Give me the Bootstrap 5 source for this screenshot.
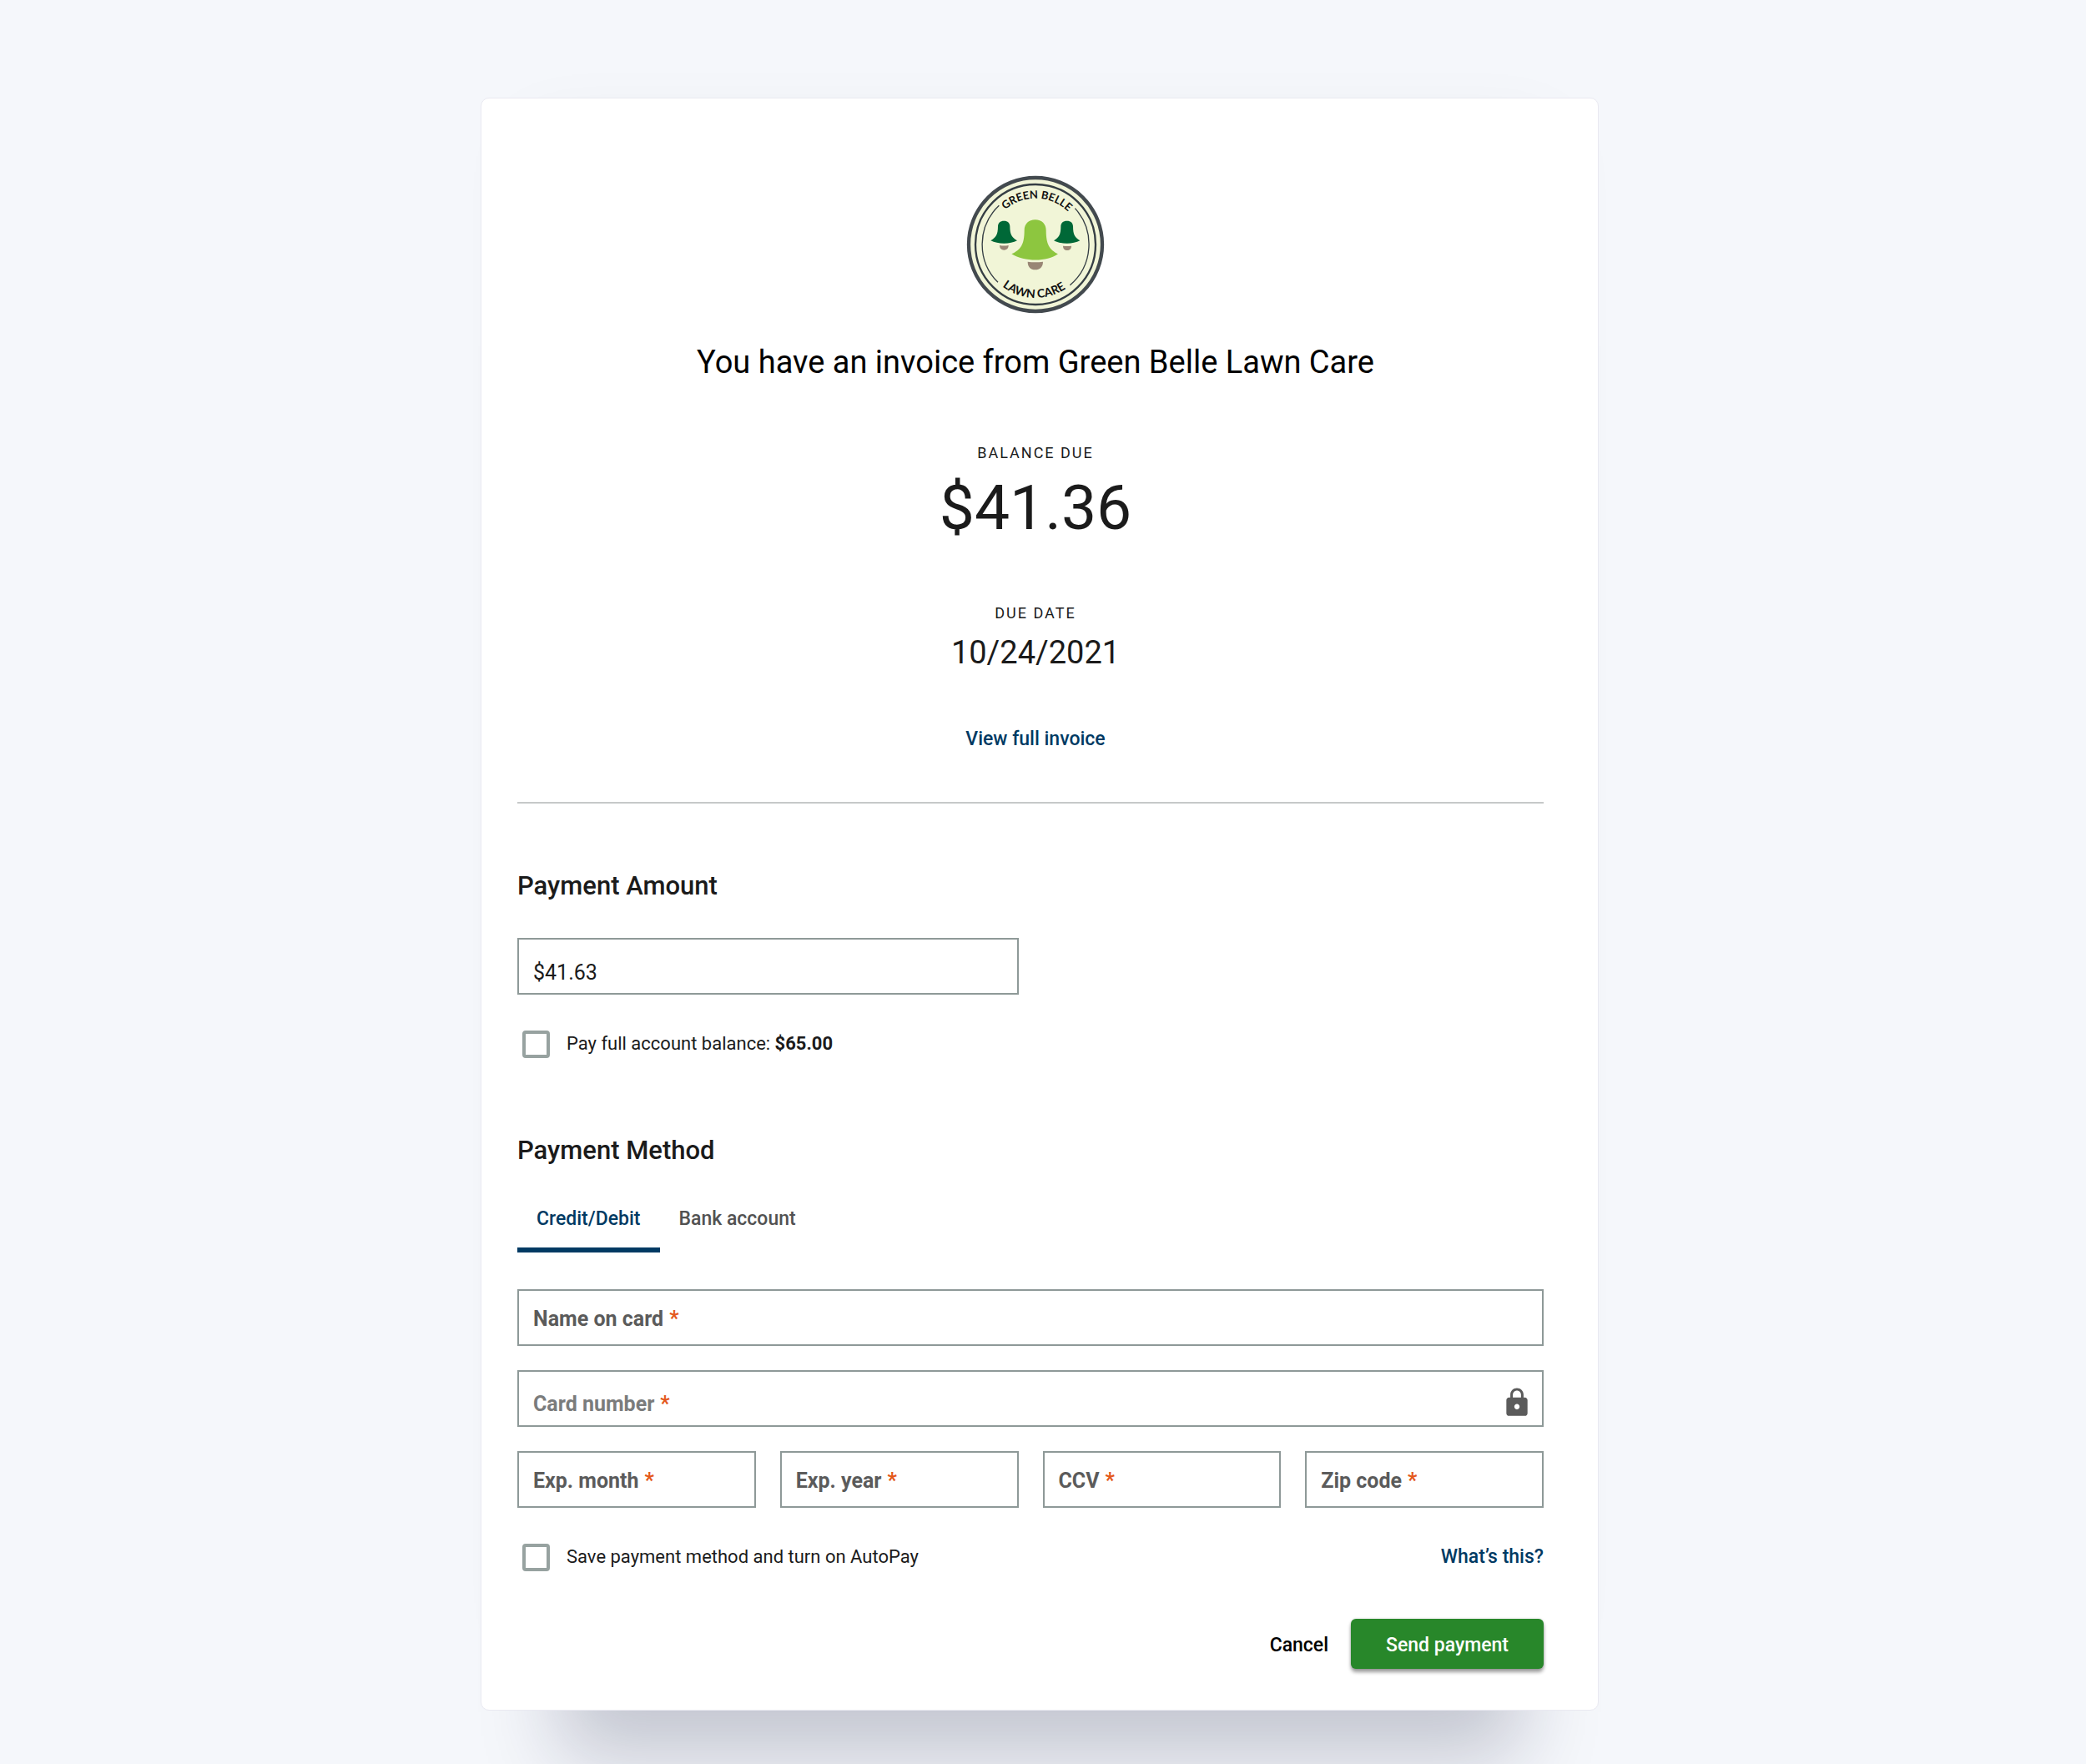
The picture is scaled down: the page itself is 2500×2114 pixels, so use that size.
<!DOCTYPE html>
<html lang="en">
<head>
<meta charset="utf-8">
<meta name="viewport" content="width=device-width, initial-scale=1">
<title>Green Belle Lawn Care – Invoice payment</title>
<link href="https://cdn.jsdelivr.net/npm/bootstrap@5.3.0/dist/css/bootstrap.min.css" rel="stylesheet">
<style>
  :root { --ink: #1b1b1b; --navy: #003a63; --edge: #8e9998; --field-gap: 29px; }
  body { background: #f5f7fb; color: var(--ink); font-family: Roboto, "Noto Sans", sans-serif; font-size: 22px; line-height: 28px; overflow-x: hidden; }
  .page-wrap { padding: 117px 8px 64px 0; overflow: hidden; }
  .pay-card { max-width: 1340px; border: 1px solid #e9e9f1; border-radius: 10px; padding: 92px 65px 49px 43px;
    box-shadow: 0 150px 90px -95px rgba(20, 24, 60, .22), 0 -20px 80px -60px rgba(30, 30, 40, .08); }
  .summary { padding-left: 12px; }
  .brand-logo { width: 166px; height: 166px; margin-bottom: 35px; }
  .title-text { font-size: 38px; line-height: 46px; font-weight: 400; color: #000; margin-bottom: 74px; }
  .overline { font-size: 18px; line-height: 24px; letter-spacing: 2px; text-transform: uppercase; font-weight: 400; margin-bottom: 9px; }
  .amount-due { font-size: 75px; line-height: 88px; margin-bottom: 71px; }
  .date-due { font-size: 38px; line-height: 52px; margin-bottom: 64px; }
  .text-link { color: var(--navy); font-size: 23px; font-weight: 500; text-decoration: none; }
  .text-link:hover { text-decoration: underline; }
  .rule { border: 0; border-top: 2px solid #c6c9c9; opacity: 1; margin: 61px 0 80px; }
  .section-title { font-size: 31px; line-height: 38px; font-weight: 500; margin: 0; }
  .section-title + .field-row { margin-top: 43px; }
  .field-row { display: grid; gap: var(--field-gap); grid-template-columns: repeat(4, minmax(0, 1fr)); }
  .field-half { grid-column: span 2; }
  .field-full { grid-column: 1 / -1; }
  .form-control, .form-floating > .form-control { height: 68px; min-height: 68px; border: 2px solid var(--edge); border-radius: 0; padding: 0 17px; font-size: 25px; line-height: 30px; color: var(--ink); background: #fff; }
  .form-control.money { padding-top: 14px; }
  .form-floating > label { height: 68px; padding: 3px 19px 0; border: 0; display: flex; align-items: center; gap: 7px; font-size: 25px; line-height: 30px; font-weight: 700; color: #5b5b5b; }
  .form-floating > label.low { padding-top: 13px; color: #7b7c7c; }
  .form-floating > .form-control:focus ~ label, .form-floating > .form-control:not(:placeholder-shown) ~ label { opacity: 0; transform: none; }
  .req { color: #e4591b; }
  .lock-icon { position: absolute; right: 13px; top: 20px; width: 38px; height: 38px; }
  .check-line { display: flex; align-items: center; gap: 20px; padding-left: 6px; margin: 42px 0 0; min-height: 34px; }
  .check-line .form-check-input { float: none; width: 33px; height: 33px; margin: 0; border: 4px solid #97a2a0; border-radius: 4px; flex: none; }
  .method-title { margin-top: 92px; }
  .nav-tabs { border: 0; margin: 37px 0 44px; }
  .nav-tabs .nav-link { border: 0; border-bottom: 6px solid transparent; border-radius: 0; margin: 0; padding: 12px 23px 20px; color: #525252; font-size: 23px; font-weight: 500; background: none; }
  .nav-tabs .nav-link.active { color: var(--navy); border-color: var(--navy); background: none; }
  .actions { margin-top: 57px; gap: 27px; }
  .actions .btn { font-size: 23px; line-height: 28px; font-weight: 500; border: 0; height: 60px; }
  .actions .btn-plain { color: #000; padding: 3px 0 0; }
  .actions .btn-send { color: #fff; background: #28872a; border-radius: 6px; padding: 3px 42px 0; box-shadow: 0 4px 4px rgba(0, 0, 0, .38), 0 0 3px rgba(0, 0, 0, .15); }
  .actions .btn-send:hover { color: #fff; background: #217323; }
</style>
</head>
<body>
<main class="page-wrap min-vh-100">
  <section class="card pay-card mx-auto">
    <header class="summary text-center d-flex flex-column align-items-center">
      <svg class="brand-logo" viewBox="54 58 498 498" role="img" aria-label="Green Belle Lawn Care">
        <defs>
          <path id="arc-top" d="M137 307a166 166 0 0 1 332 0"/>
          <path id="arc-bottom" d="M111 307a192 192 0 0 0 384 0"/>
          <g id="bell">
            <path d="M0-90C-24-90-39-74-39-52C-39 0-52 18-85 33C-38 62 42 62 82 33C52 18 39 0 39-52C39-74 24-90 0-90Z"/>
          </g>
        </defs>
        <circle cx="303" cy="307" r="240" fill="#f1f5d7" stroke="#434a4f" stroke-width="13"/>
        <circle cx="303" cy="307" r="216" fill="none" stroke="#353e44" stroke-width="7"/>
        <path d="M172 167A192 192 0 0 0 168 443M445 177A192 192 0 0 1 427 453" fill="none" stroke="#353e44" stroke-width="4"/>
        <use href="#bell" x="302" y="308" fill="#8dc63f"/>
        <g fill="#006837">
          <path d="M190 222C176 222 168 230 168 242C168 272 160 283 142 293C168 307 212 307 237 293C219 283 211 272 211 242C211 230 203 222 190 222Z"/>
          <path d="M416 222C402 222 394 230 394 242C394 272 387 283 369 293C395 307 438 307 463 293C445 283 438 272 438 242C438 230 430 222 416 222Z"/>
        </g>
        <g fill="#998675">
          <path d="M275 369Q302 373 330 369C330 388 318 398 302 398S275 388 275 369Z"/>
          <path d="M174 310Q190 313 206 310C206 321 199 327 190 327S174 321 174 310Z"/>
          <path d="M402 312Q417 314 432 312C432 322 426 328 417 328S402 322 402 312Z"/>
        </g>
        <g font-family="Lato, sans-serif" font-weight="700" fill="#111" text-anchor="middle">
          <text font-size="39"><textPath href="#arc-top" startOffset="51%">GREEN BELLE</textPath></text>
          <text font-size="42"><textPath href="#arc-bottom" startOffset="49%">LAWN CARE</textPath></text>
        </g>
      </svg>
      <h1 class="title-text">You have an invoice from Green Belle Lawn Care</h1>
      <h2 class="overline">Balance due</h2>
      <div class="amount-due">$41.36</div>
      <h2 class="overline">Due date</h2>
      <div class="date-due">10/24/2021</div>
      <a class="text-link" href="#invoice">View full invoice</a>
    </header>

    <hr class="rule">

    <form>
      <h2 class="section-title" id="amount-title">Payment Amount</h2>
      <div class="field-row">
        <div class="field-half"><input class="form-control money" type="text" value="$41.63" aria-labelledby="amount-title"></div>
      </div>
      <div class="check-line">
        <input class="form-check-input" type="checkbox" id="full-balance">
        <label for="full-balance">Pay full account balance: <strong>$65.00</strong></label>
      </div>

      <h2 class="section-title method-title">Payment Method</h2>
      <ul class="nav nav-tabs" role="tablist">
        <li class="nav-item"><button class="nav-link active" type="button" role="tab" aria-selected="true">Credit/Debit</button></li>
        <li class="nav-item"><button class="nav-link" type="button" role="tab" aria-selected="false">Bank account</button></li>
      </ul>

      <div class="field-row">
        <div class="form-floating field-full">
          <input class="form-control" type="text" id="card-name" placeholder=" " required>
          <label for="card-name">Name on card <span class="req">*</span></label>
        </div>
        <div class="form-floating field-full">
          <input class="form-control" type="text" id="card-number" placeholder=" " required>
          <label class="low" for="card-number">Card number <span class="req">*</span></label>
          <svg class="lock-icon" viewBox="0 0 24 24" fill="#5b5b5b" aria-hidden="true"><path d="M18 8h-1V6c0-2.760-2.240-5-5-5S7 3.240 7 6v2H6c-1.100 0-2 .9-2 2v10c0 1.100.9 2 2 2h12c1.100 0 2-.9 2-2V10c0-1.100-.9-2-2-2zm-6 9c-1.100 0-2-.9-2-2s.9-2 2-2 2 .9 2 2-.9 2-2 2zm3.100-9H8.900V6c0-1.710 1.390-3.100 3.100-3.100s3.100 1.390 3.100 3.100v2z"/></svg>
        </div>
        <div class="form-floating">
          <input class="form-control" type="text" id="exp-month" placeholder=" " required>
          <label for="exp-month">Exp. month <span class="req">*</span></label>
        </div>
        <div class="form-floating">
          <input class="form-control" type="text" id="exp-year" placeholder=" " required>
          <label for="exp-year">Exp. year <span class="req">*</span></label>
        </div>
        <div class="form-floating">
          <input class="form-control" type="text" id="ccv" placeholder=" " required>
          <label for="ccv">CCV <span class="req">*</span></label>
        </div>
        <div class="form-floating">
          <input class="form-control" type="text" id="zip" placeholder=" " required>
          <label for="zip">Zip code <span class="req">*</span></label>
        </div>
      </div>

      <div class="check-line">
        <input class="form-check-input" type="checkbox" id="autopay">
        <label for="autopay">Save payment method and turn on AutoPay</label>
        <a class="text-link ms-auto" href="#autopay-help">What’s this?</a>
      </div>

      <div class="actions d-flex justify-content-end align-items-center">
        <button class="btn btn-plain" type="button">Cancel</button>
        <button class="btn btn-send" type="submit">Send payment</button>
      </div>
    </form>
  </section>
</main>
<script src="https://cdn.jsdelivr.net/npm/bootstrap@5.3.0/dist/js/bootstrap.bundle.min.js"></script>
</body>
</html>
